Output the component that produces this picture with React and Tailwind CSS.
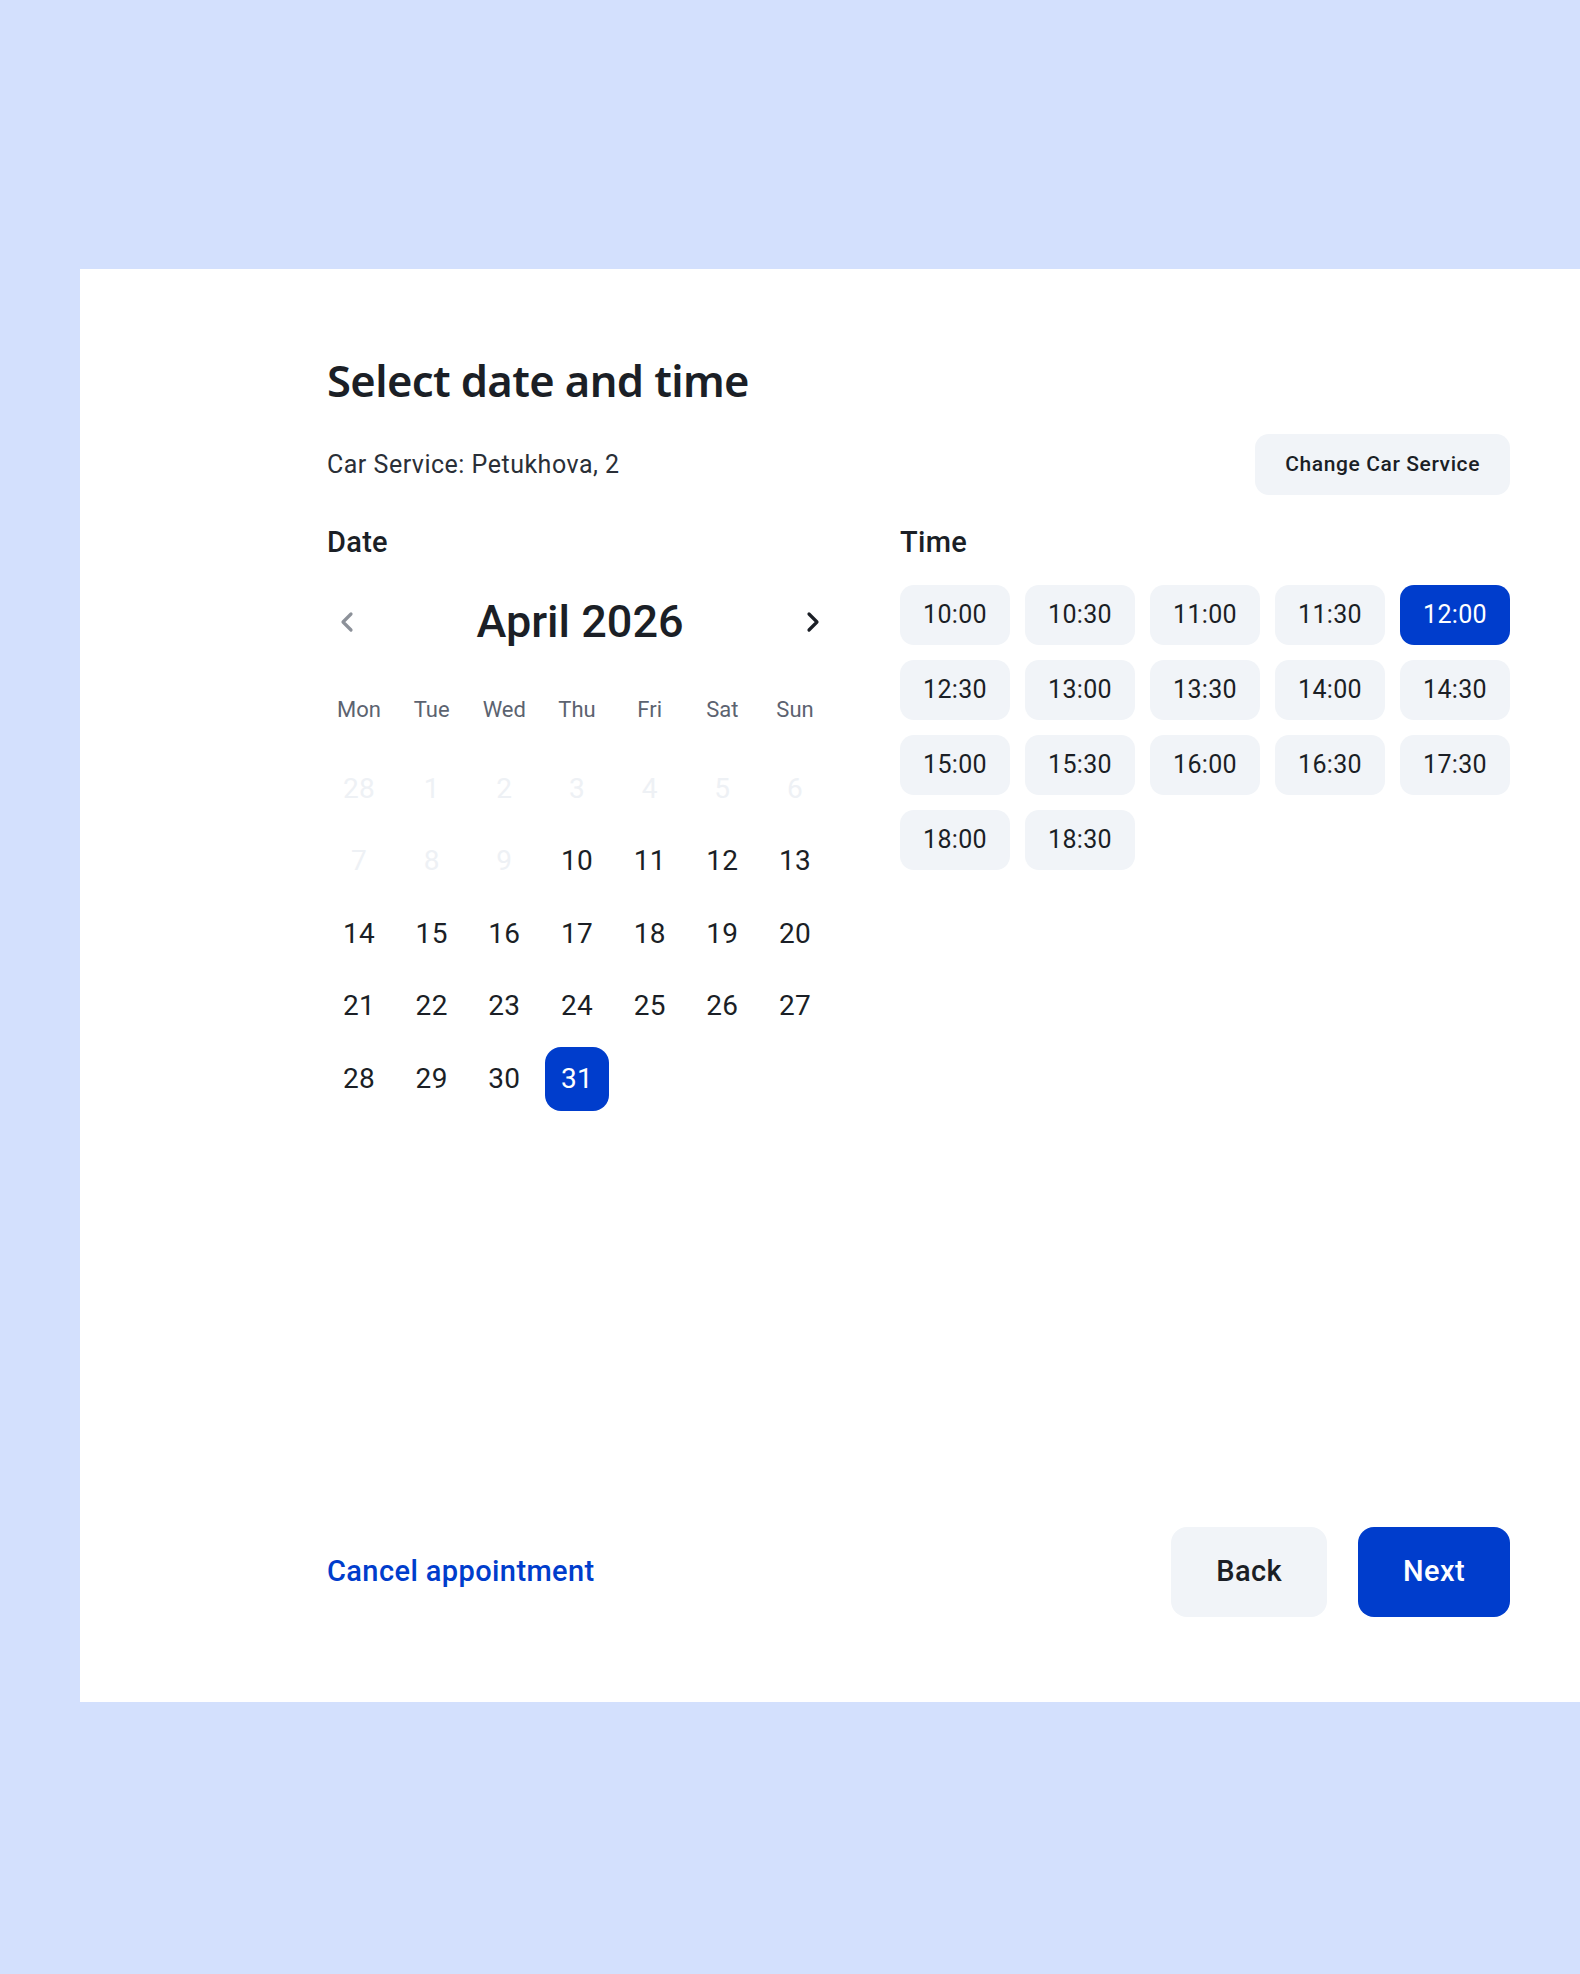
import React, { useState } from "react";

const TIMES = [
  "10:00", "10:30", "11:00", "11:30", "12:00",
  "12:30", "13:00", "13:30", "14:00", "14:30",
  "15:00", "15:30", "16:00", "16:30", "17:30",
  "18:00", "18:30",
];

const WEEKDAYS = ["Mon", "Tue", "Wed", "Thu", "Fri", "Sat", "Sun"];

// April 2026 grid, Monday first. Leading days are from March / not available
const DAYS = [
  { n: 28, off: true }, { n: 1, off: true }, { n: 2, off: true }, { n: 3, off: true },
  { n: 4, off: true }, { n: 5, off: true }, { n: 6, off: true },
  { n: 7, off: true }, { n: 8, off: true }, { n: 9, off: true },
  ...Array.from({ length: 22 }, (_, i) => ({ n: i + 10, off: false })),
];

function Chevron({ dir = "left", className }) {
  return (
    <svg
      xmlns="http://www.w3.org/2000/svg"
      viewBox="0 0 24 24"
      fill="none"
      stroke="currentColor"
      strokeWidth={2.4}
      strokeLinecap="round"
      strokeLinejoin="round"
      className={className}
    >
      {dir === "left" ? <path d="M15 18l-6-6 6-6" /> : <path d="M9 18l6-6-6-6" />}
    </svg>
  );
}

export default function App() {
  const [day, setDay] = useState(31);
  const [time, setTime] = useState("12:00");

  return (
    <div
      className="min-h-[1974px] bg-[#d3e0fd] pt-[269px] pl-[80px]"
      style={{ fontFamily: "Roboto, 'Noto Sans', sans-serif" }}
    >
      <div className="bg-white h-[1433px] pl-[247px] pr-[70px] pt-[85px] pb-[85px] flex flex-col text-[#1b1f26]">
        <h1 className="font-['Noto_Sans',sans-serif] font-semibold text-[43.5px] leading-[52px] tracking-[-0.6px]">
          Select date and time
        </h1>

        <div className="mt-[28px] flex items-center justify-between">
          <p className="text-[25px] leading-[32px] tracking-[0.5px] text-[#2a2f37]">Car Service: Petukhova, 2</p>
          <button className="h-[61px] px-[30px] rounded-[14px] bg-[#f1f4f8] text-[21px] tracking-[0.6px] font-medium text-[#1b1f26]">
            Change Car Service
          </button>
        </div>

        <div className="mt-[29px] flex justify-between">
          {/* Date */}
          <div className="w-[500px]">
            <h2 className="text-[29px] leading-[36px] tracking-[0.3px] font-medium">Date</h2>

            <div className="mt-[38px] h-[48px] flex items-center justify-between">
              <button className="w-[32px] h-[32px] ml-[4px] text-[#8c9199]">
                <Chevron dir="left" className="w-[32px] h-[32px]" />
              </button>
              <span className="text-[45px] font-medium leading-[48px]">April 2026</span>
              <button className="w-[32px] h-[32px] mr-[-2px] text-[#1b1f26]">
                <Chevron dir="right" className="w-[32px] h-[32px]" />
              </button>
            </div>

            <div className="mt-[43px] grid grid-cols-7 gap-x-[8.7px]">
              {WEEKDAYS.map((w) => (
                <div key={w} className="h-[40px] flex items-center justify-center text-[22px] text-[#5c6370]">
                  {w}
                </div>
              ))}
            </div>

            <div className="mt-[27.6px] grid grid-cols-7 gap-x-[8.7px] gap-y-[8.6px]">
              {DAYS.map((d, i) => (
                <button
                  key={i}
                  disabled={d.off}
                  onClick={() => setDay(d.n)}
                  className={
                    "h-[64px] rounded-[16px] flex items-center justify-center text-[28px] tracking-[0.3px] " +
                    (d.off
                      ? "text-[#eef1f5]"
                      : d.n === day
                      ? "bg-[#003dcc] text-white"
                      : "text-[#1b1f26]")
                  }
                >
                  {d.n}
                </button>
              ))}
            </div>
          </div>

          {/* Time */}
          <div className="w-[610px]">
            <h2 className="text-[29px] leading-[36px] tracking-[0.3px] font-medium">Time</h2>
            <div className="mt-[25px] grid grid-cols-5 gap-[15px]">
              {TIMES.map((t) => (
                <button
                  key={t}
                  onClick={() => setTime(t)}
                  className={
                    "h-[60px] rounded-[14px] text-[25px] tracking-[0.3px] " +
                    (t === time ? "bg-[#003dcc] text-white" : "bg-[#f1f4f8] text-[#1b1f26]")
                  }
                >
                  {t}
                </button>
              ))}
            </div>
          </div>
        </div>

        <div className="mt-auto flex items-center justify-between">
          <button className="text-[29px] tracking-[0.4px] font-medium text-[#003dcc]">Cancel appointment</button>
          <div className="flex gap-[31px]">
            <button className="h-[90px] px-[45px] rounded-[16px] bg-[#f1f4f8] text-[29px] tracking-[0.4px] font-medium text-[#1b1f26]">
              Back
            </button>
            <button className="h-[90px] px-[45px] rounded-[16px] bg-[#003dcc] text-[29px] tracking-[0.4px] font-medium text-white">
              Next
            </button>
          </div>
        </div>
      </div>
    </div>
  );
}
